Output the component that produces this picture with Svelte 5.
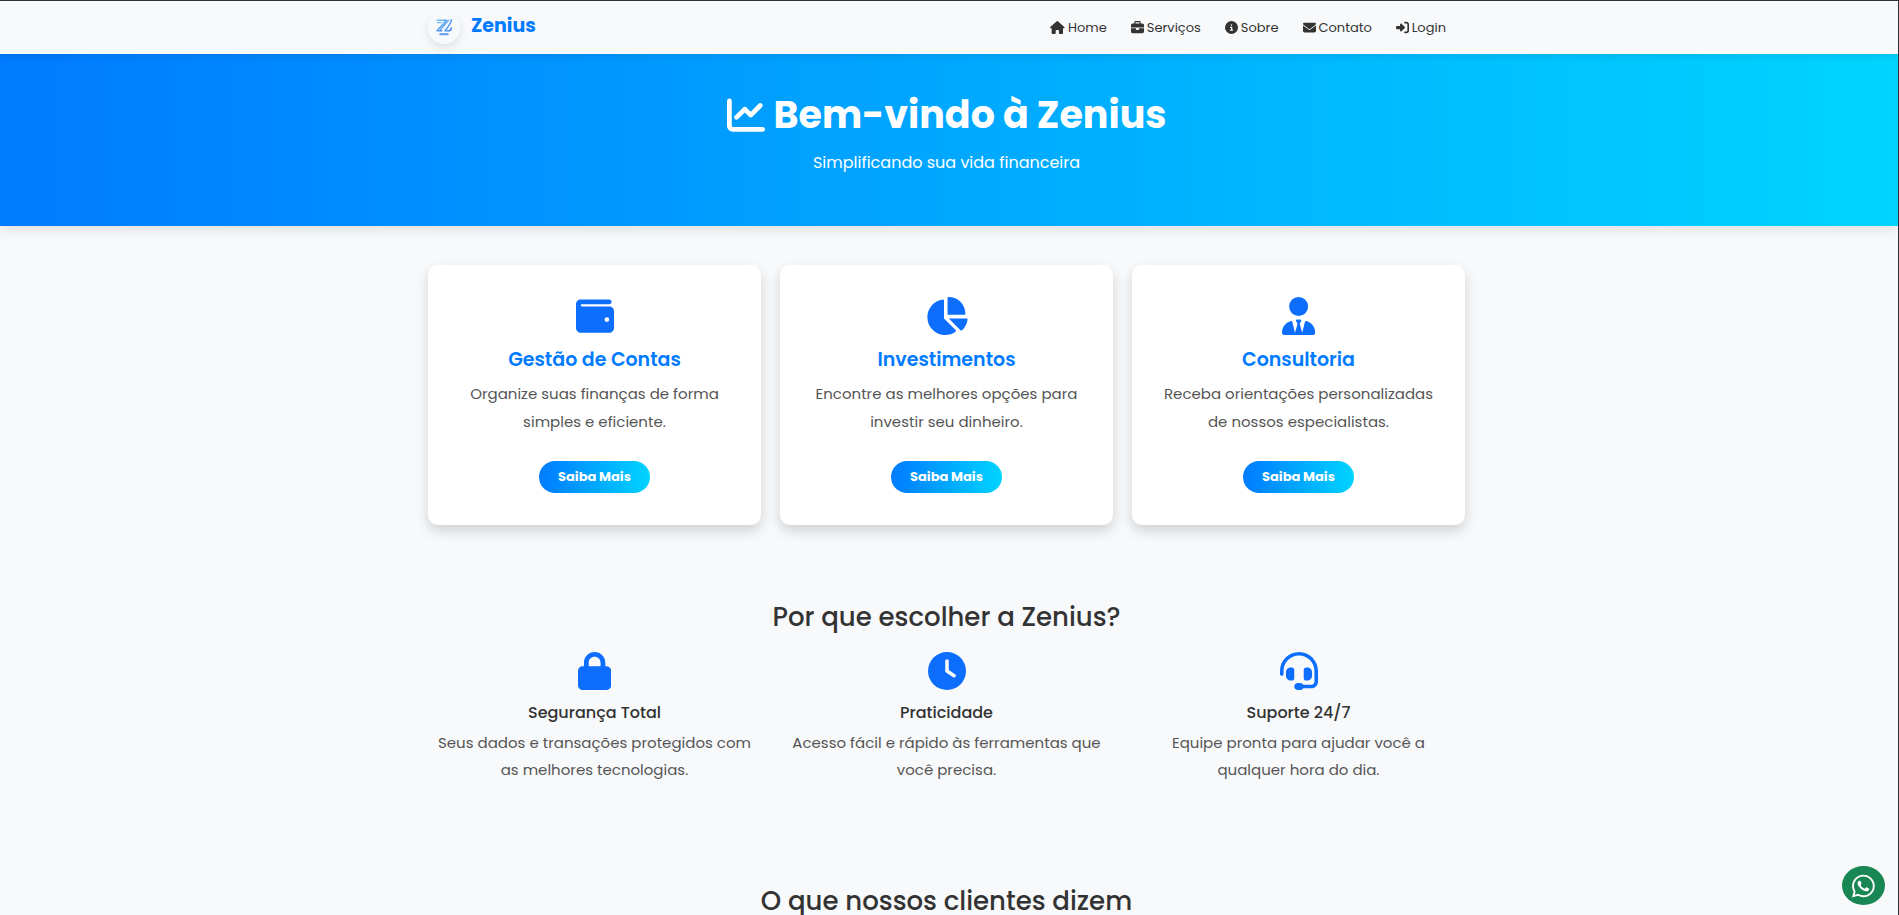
<script lang="ts">
  type Icon = { box: string; d: string };

  // Icon shapes, all drawn on a 512 unit high grid
  const icons: Record<string, Icon> = {
    home: {
      box: '0 0 576 512',
      d: 'M575.8 255.5c0 18-15 32.1-32 32.1h-32l.7 160.2c0 2.7-.2 5.4-.5 8.1V472c0 22.1-17.9 40-40 40H456c-1.1 0-2.2 0-3.3-.1c-1.4 .1-2.8 .1-4.2 .1H416 392c-22.1 0-40-17.9-40-40V448 384c0-17.7-14.3-32-32-32H256c-17.7 0-32 14.3-32 32v64 24c0 22.1-17.9 40-40 40H160 128.1c-1.5 0-3-.1-4.5-.2c-1.2 .1-2.4 .2-3.6 .2H104c-22.1 0-40-17.9-40-40V360c0-.9 0-1.9 .1-2.8V287.6H32c-18 0-32-14-32-32.1c0-9 3-17 10-24L266.4 8c7-7 15-8 22-8s15 2 21 7L564.8 231.5c8 7 12 15 11 24z'
    },
    briefcase: {
      box: '0 0 512 512',
      d: 'M184 48H328c4.4 0 8 3.6 8 8V96H176V56c0-4.4 3.6-8 8-8zm-56 8V96H64C28.7 96 0 124.7 0 160v96H192 320 512V160c0-35.3-28.7-64-64-64H384V56c0-30.9-25.1-56-56-56H184c-30.9 0-56 25.1-56 56zM512 288H320v32c0 17.7-14.3 32-32 32H224c-17.7 0-32-14.3-32-32V288H0V416c0 35.3 28.7 64 64 64H448c35.3 0 64-28.7 64-64V288z'
    },
    info: {
      box: '0 0 512 512',
      d: 'M256 512A256 256 0 1 0 256 0a256 256 0 1 0 0 512zM216 336h24V272H216c-13.3 0-24-10.7-24-24s10.7-24 24-24h48c13.3 0 24 10.7 24 24v88h8c13.3 0 24 10.7 24 24s-10.7 24-24 24H216c-13.3 0-24-10.7-24-24s10.7-24 24-24zm40-208a32 32 0 1 1 0 64 32 32 0 1 1 0-64z'
    },
    envelope: {
      box: '0 0 512 512',
      d: 'M48 64C21.5 64 0 85.5 0 112c0 15.1 7.1 29.3 19.2 38.4L236.8 313.6c11.4 8.5 27 8.5 38.4 0L492.8 150.4c12.1-9.1 19.2-23.3 19.2-38.4c0-26.5-21.5-48-48-48H48zM0 176V384c0 35.3 28.7 64 64 64H448c35.3 0 64-28.7 64-64V176L294.4 339.2c-22.8 17.1-54 17.1-76.8 0L0 176z'
    },
    login: {
      box: '0 0 512 512',
      d: 'M217.9 105.9L340.7 228.7c7.2 7.2 11.3 17.1 11.3 27.3s-4.1 20.1-11.3 27.3L217.9 406.1c-6.4 6.4-15 9.9-24 9.9c-18.7 0-33.9-15.2-33.9-33.9l0-62.1L32 320c-17.7 0-32-14.3-32-32l0-64c0-17.7 14.3-32 32-32l128 0 0-62.1c0-18.7 15.2-33.9 33.9-33.9c9 0 17.6 3.6 24 9.9zM352 416l64 0c17.7 0 32-14.3 32-32l0-256c0-17.7-14.3-32-32-32l-64 0c-17.7 0-32-14.3-32-32s14.3-32 32-32l64 0c53 0 96 43 96 96l0 256c0 53-43 96-96 96l-64 0c-17.7 0-32-14.3-32-32s14.3-32 32-32z'
    },
    chartLine: {
      box: '0 0 512 512',
      d: 'M64 64c0-17.7-14.3-32-32-32S0 46.3 0 64V400c0 44.2 35.8 80 80 80H480c17.7 0 32-14.3 32-32s-14.3-32-32-32H80c-8.8 0-16-7.2-16-16V64zm406.6 86.6c12.5-12.5 12.5-32.8 0-45.3s-32.8-12.5-45.3 0L320 210.7l-57.4-57.4c-12.5-12.5-32.8-12.5-45.3 0l-112 112c-12.5 12.5-12.5 32.8 0 45.3s32.8 12.5 45.3 0L240 221.3l57.4 57.4c12.5 12.5 32.8 12.5 45.3 0l128-128z'
    },
    wallet: {
      box: '0 0 512 512',
      d: 'M64 32C28.7 32 0 60.7 0 96V416c0 35.3 28.7 64 64 64H448c35.3 0 64-28.7 64-64V192c0-35.3-28.7-64-64-64H80c-8.8 0-16-7.2-16-16s7.2-16 16-16H448c17.7 0 32-14.3 32-32s-14.3-32-32-32H64zM416 272a32 32 0 1 1 0 64 32 32 0 1 1 0-64z'
    },
    chartPie: {
      box: '0 0 576 512',
      d: 'M304 240V16.6c0-9 7-16.6 16-16.6C443.7 0 544 100.3 544 224c0 9-7.6 16-16.6 16H304zM32 272C32 150.7 122.1 50.3 239 34.3c9.2-1.3 17 6.1 17 15.4V288L412.5 444.5c6.7 6.7 6.2 17.7-1.5 23.1C371.8 495.6 323.8 512 272 512C139.5 512 32 404.6 32 272zm526.4 16c9.3 0 16.6 7.8 15.4 17c-7.7 55.9-34.6 105.6-73.9 142.3c-6 5.6-15.4 5.2-21.2-.7L320 288H558.4z'
    },
    userTie: {
      box: '0 0 448 512',
      d: 'M96 128a128 128 0 1 0 256 0A128 128 0 1 0 96 128zm94.5 200.2l18.6 31L175.8 483.1l-36-146.9c-2-8.1-9.8-13.4-17.9-11.3C51.9 342.4 0 405.8 0 481.3c0 17 13.8 30.7 30.7 30.7H162.5c0 0 0 0 .1 0H168 280h5.5c0 0 0 0 .1 0H417.3c17 0 30.7-13.8 30.7-30.7c0-75.5-51.9-138.9-121.9-156.4c-8.1-2-15.9 3.3-17.9 11.3l-36 146.9L238.9 359.2l18.6-31c6.4-10.7-1.3-24.2-13.7-24.2H224 204.3c-12.4 0-20.1 13.6-13.7 24.2z'
    },
    lock: {
      box: '0 0 448 512',
      d: 'M144 144v48H304V144c0-44.2-35.8-80-80-80s-80 35.8-80 80zM80 192V144C80 64.5 144.5 0 224 0s144 64.5 144 144v48h16c35.3 0 64 28.7 64 64V448c0 35.3-28.7 64-64 64H64c-35.3 0-64-28.7-64-64V256c0-35.3 28.7-64 64-64H80z'
    },
    clock: {
      box: '0 0 512 512',
      d: 'M256 0a256 256 0 1 1 0 512A256 256 0 1 1 256 0zM232 120V256c0 8 4 15.5 10.7 20l96 64c11 7.4 25.9 4.4 33.3-6.7s4.4-25.9-6.7-33.3L280 243.2V120c0-13.3-10.7-24-24-24s-24 10.7-24 24z'
    },
    headset: {
      box: '0 0 512 512',
      d: 'M256 48C141.1 48 48 141.1 48 256v40c0 13.3-10.7 24-24 24s-24-10.7-24-24V256C0 114.6 114.6 0 256 0S512 114.6 512 256V400.1c0 48.6-39.4 88-88.1 88L313.6 488c-8.3 14.3-23.8 24-41.6 24H240c-26.5 0-48-21.5-48-48s21.5-48 48-48h32c17.8 0 33.3 9.7 41.6 24l110.4 .1c22.1 0 40-17.9 40-40V256c0-114.9-93.1-208-208-208zM144 208h16c17.7 0 32 14.3 32 32V352c0 17.7-14.3 32-32 32H144c-35.3 0-64-28.7-64-64V272c0-35.3 28.7-64 64-64zm224 0c35.3 0 64 28.7 64 64v48c0 35.3-28.7 64-64 64H352c-17.7 0-32-14.3-32-32V240c0-17.7 14.3-32 32-32h16z'
    },
    whatsapp: {
      box: '0 0 448 512',
      d: 'M380.9 97.1C339 55.1 283.2 32 223.9 32c-122.4 0-222 99.6-222 222 0 39.1 10.2 77.3 29.6 111L0 480l117.7-30.9c32.4 17.7 68.9 27 106.1 27h.1c122.3 0 224.1-99.6 224.1-222 0-59.3-25.2-115-67.1-157zm-157 341.6c-33.2 0-65.7-8.9-94-25.7l-6.7-4-69.8 18.3L72 359.2l-4.4-7c-18.5-29.4-28.2-63.3-28.2-98.2 0-101.7 82.8-184.5 184.6-184.5 49.3 0 95.6 19.2 130.4 54.1 34.8 34.9 56.2 81.2 56.1 130.5 0 101.8-84.9 184.6-186.6 184.6zm101.2-138.2c-5.5-2.8-32.8-16.2-37.9-18-5.1-1.9-8.8-2.8-12.5 2.8-3.7 5.6-14.3 18-17.6 21.8-3.2 3.7-6.5 4.2-12 1.4-32.6-16.3-54-29.1-75.5-66-5.7-9.8 5.7-9.1 16.3-30.3 1.8-3.7.9-6.9-.5-9.7-1.4-2.8-12.5-30.1-17.1-41.2-4.5-10.8-9.1-9.3-12.5-9.5-3.2-.2-6.9-.2-10.6-.2-3.7 0-9.7 1.4-14.8 6.9-5.1 5.6-19.4 19-19.4 46.3 0 27.3 19.9 53.7 22.6 57.4 2.8 3.7 39.1 59.7 94.8 83.8 35.2 15.2 49 16.5 66.6 13.9 10.7-1.6 32.8-13.4 37.4-26.4 4.6-13 4.6-24.1 3.2-26.4-1.3-2.5-5-3.9-10.5-6.6z'
    }
  };

  const links = [
    { href: '#home', icon: 'home', label: 'Home' },
    { href: '#servicos', icon: 'briefcase', label: 'Serviços' },
    { href: '#sobre', icon: 'info', label: 'Sobre' },
    { href: '#contato', icon: 'envelope', label: 'Contato' },
    { href: '#login', icon: 'login', label: 'Login' }
  ];

  const services = [
    { icon: 'wallet', title: 'Gestão de Contas', text: 'Organize suas finanças de forma simples e eficiente.' },
    { icon: 'chartPie', title: 'Investimentos', text: 'Encontre as melhores opções para investir seu dinheiro.' },
    { icon: 'userTie', title: 'Consultoria', text: 'Receba orientações personalizadas de nossos especialistas.' }
  ];

  const benefits = [
    { icon: 'lock', title: 'Segurança Total', text: 'Seus dados e transações protegidos com as melhores tecnologias.' },
    { icon: 'clock', title: 'Praticidade', text: 'Acesso fácil e rápido às ferramentas que você precisa.' },
    { icon: 'headset', title: 'Suporte 24/7', text: 'Equipe pronta para ajudar você a qualquer hora do dia.' }
  ];
</script>

{#snippet glyph(name: string)}
  <svg class="icon" viewBox={icons[name].box} aria-hidden="true">
    <path d={icons[name].d} />
  </svg>
{/snippet}

<div class="page">
  <header class="topbar">
    <div class="container topbar-inner">
      <a class="brand" href="#home">
        <span class="logo">
          <svg viewBox="0 0 32 32" aria-hidden="true">
            <defs>
              <linearGradient id="logo-fill" x1="0" y1="0" x2="1" y2="1">
                <stop offset="0" stop-color="#7cc4fb" />
                <stop offset="1" stop-color="#3b82f0" />
              </linearGradient>
            </defs>
            <g fill="none" stroke="url(#logo-fill)" stroke-linecap="round" stroke-linejoin="round">
              <path stroke-width="1.6" d="M9 8.2h9.6L9 18.8h4.6" />
              <path stroke-width="1.3" d="M9.4 10.6h3.8M20.6 8.2l-8.4 10" />
              <path stroke-width="1.6" d="M23.4 7.8c-.2 3-2.2 5.8-6.4 11h3.6c1.6 0 2.4-1.2 2.8-2.8" />
            </g>
            <path fill="#5f9bea" d="M11.5 21.2h9v2h-9z" />
          </svg>
        </span>
        Zenius
      </a>
      <nav class="menu">
        {#each links as link}
          <a href={link.href}>{@render glyph(link.icon)}{link.label}</a>
        {/each}
      </nav>
    </div>
  </header>

  <section class="hero" id="home">
    <h1>{@render glyph('chartLine')}Bem-vindo à Zenius</h1>
    <p>Simplificando sua vida financeira</p>
  </section>

  <main>
    <section class="container grid" id="servicos">
      {#each services as service}
        <article class="card">
          {@render glyph(service.icon)}
          <h3>{service.title}</h3>
          <p>{service.text}</p>
          <button type="button">Saiba Mais</button>
        </article>
      {/each}
    </section>

    <section class="container benefits" id="sobre">
      <h2>Por que escolher a Zenius?</h2>
      <div class="grid">
        {#each benefits as benefit}
          <div class="benefit">
            {@render glyph(benefit.icon)}
            <h4>{benefit.title}</h4>
            <p>{benefit.text}</p>
          </div>
        {/each}
      </div>
    </section>

    <section class="container testimonials">
      <h2>O que nossos clientes dizem</h2>
    </section>
  </main>

  <a class="whatsapp" href="#whatsapp" aria-label="WhatsApp">{@render glyph('whatsapp')}</a>
</div>

<style>
  :global(body) {
    background: #f8f9fb;
    overflow: hidden;
  }

  .page {
    box-sizing: border-box;
    height: 100vh;
    overflow: hidden;
    border-top: 1px solid #2f3035;
    border-right: 1px solid #2f3035;
    background: #f8f9fb;
    color: #333;
    font-family: Poppins, Inter, "Open Sans", sans-serif;
    font-size: 16px;
  }

  h1, h2, h3, h4, p {
    margin: 0;
  }

  a {
    color: inherit;
    text-decoration: none;
  }

  .icon {
    display: inline-block;
    height: 1em;
    fill: currentColor;
  }

  .container {
    box-sizing: border-box;
    width: 100%;
    max-width: 1037px;
    margin: 0 auto;
  }

  /* the scrolled content is centred slightly left of the window */
  .topbar, .hero, main {
    padding-right: 5px;
  }

  .topbar {
    position: relative;
    background: #f8f9fb;
    box-shadow: 0 2px 8px rgba(0, 0, 0, 0.1);
  }

  .topbar-inner {
    display: flex;
    align-items: center;
    justify-content: space-between;
    height: 53px;
  }

  .brand {
    display: flex;
    align-items: flex-start;
    gap: 11px;
    color: #007bff;
    font-size: 19px;
    font-weight: 700;
    line-height: 28px;
  }

  .logo {
    width: 32px;
    height: 32px;
    border-radius: 50%;
    background: #f8f9fb;
    box-shadow: 0 4px 10px rgba(0, 0, 0, 0.1);
  }

  .logo svg {
    display: block;
  }

  .menu {
    display: flex;
    gap: 24px;
    padding-right: 19px;
    font-size: 13px;
  }

  .menu a {
    display: flex;
    align-items: center;
    gap: 3px;
  }

  .hero {
    padding-top: 31px;
    padding-bottom: 49px;
    background: linear-gradient(90deg, #007bff, #00d4ff);
    box-shadow: 0 4px 12px rgba(0, 0, 0, 0.1);
    color: #fff;
    text-align: center;
  }

  h1 {
    display: flex;
    align-items: center;
    justify-content: center;
    gap: 9px;
    font-size: 38px;
    font-weight: 700;
    line-height: 60px;
  }

  h1 .icon {
    height: 38px;
  }

  .hero p {
    margin-top: 4px;
    line-height: 28px;
  }

  .grid {
    display: grid;
    grid-template-columns: repeat(3, 1fr);
    gap: 19px;
  }

  main {
    padding-top: 39px;
  }

  .card, .benefit {
    display: flex;
    flex-direction: column;
    align-items: center;
    text-align: center;
  }

  .card {
    padding: 32px 24px;
    border-radius: 10px;
    background: #fff;
    box-shadow: 0 6px 13px rgba(0, 0, 0, 0.16);
  }

  .card .icon, .benefit .icon {
    height: 38px;
    color: #0d6efd;
  }

  h3 {
    margin-top: 10px;
    color: #007bff;
    font-size: 19px;
    font-weight: 600;
    line-height: 29px;
  }

  .card p, .benefit p {
    color: #555;
    font-size: 15px;
  }

  .card p {
    margin-top: 6px;
    line-height: 28px;
  }

  button {
    height: 32px;
    margin-top: 25px;
    padding: 0 19px;
    border: 0;
    border-radius: 16px;
    background: linear-gradient(90deg, #007bff, #00d4ff);
    color: #fff;
    font-family: inherit;
    font-size: 13px;
    font-weight: 700;
  }

  .benefits {
    padding-top: 76px;
  }

  h2 {
    font-size: 26px;
    font-weight: 500;
    line-height: 32px;
    text-align: center;
  }

  .benefits .grid {
    margin-top: 19px;
  }

  /* narrower than the cards, so the longest text still ends on "com" */
  .benefit {
    padding: 0 5px;
  }

  h4 {
    margin-top: 13px;
    font-size: 16px;
    font-weight: 500;
    line-height: 20px;
  }

  .benefit p {
    margin-top: 6px;
    line-height: 27px;
  }

  .testimonials {
    padding-top: 102px;
  }

  .whatsapp {
    position: fixed;
    right: 14px;
    bottom: 10px;
    display: flex;
    align-items: center;
    justify-content: center;
    width: 43px;
    height: 39px;
    border-radius: 50%;
    background: #198754;
    color: #fff;
    font-size: 26px;
  }
</style>
